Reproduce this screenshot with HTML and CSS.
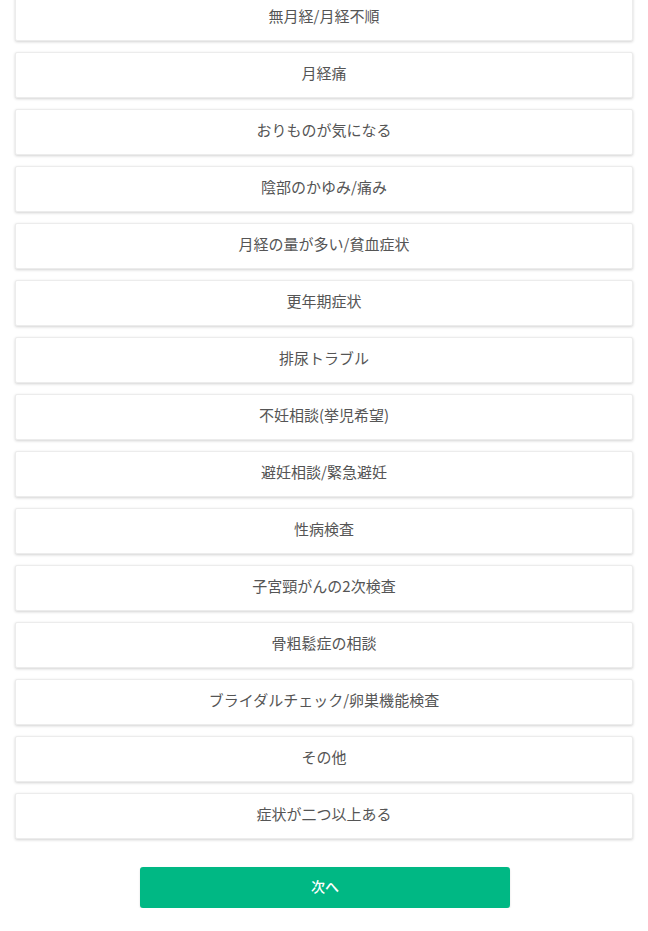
FILE: index.html
```html
<!DOCTYPE html>
<html lang="ja">
<head>
<meta charset="utf-8">
<link rel="stylesheet" href="styles.css">
</head>
<body>
<main class="page">
  <ul class="options">
    <li class="option">無月経/月経不順</li>
    <li class="option">月経痛</li>
    <li class="option">おりものが気になる</li>
    <li class="option">陰部のかゆみ/痛み</li>
    <li class="option">月経の量が多い/貧血症状</li>
    <li class="option">更年期症状</li>
    <li class="option">排尿トラブル</li>
    <li class="option">不妊相談(挙児希望)</li>
    <li class="option">避妊相談/緊急避妊</li>
    <li class="option">性病検査</li>
    <li class="option">子宮頸がんの2次検査</li>
    <li class="option">骨粗鬆症の相談</li>
    <li class="option">ブライダルチェック/卵巣機能検査</li>
    <li class="option">その他</li>
    <li class="option">症状が二つ以上ある</li>
  </ul>
  <div class="actions">
    <button class="next" type="button">次へ</button>
  </div>
</main>
</body>
</html>
```

FILE: styles.css
```css
html, body {
  margin: 0;
  padding: 0;
  background: #ffffff;
}

body {
  font-family: "Noto Sans CJK JP", "Open Sans", sans-serif;
  color: #555555;
}

.page {
  padding: 0 15px;
}

.options {
  list-style: none;
  margin: -5px 0 0;
  padding: 0;
  display: flex;
  flex-direction: column;
  gap: 11px;
}

.option {
  box-sizing: border-box;
  height: 46px;
  width: 618px;
  padding-bottom: 5px;
  display: flex;
  align-items: center;
  justify-content: center;
  background: #ffffff;
  border: 1px solid #ececec;
  border-radius: 2px;
  box-shadow: 0 1px 3px rgba(0, 0, 0, 0.18);
  font-size: 15px;
  line-height: 1;
  color: #555555;
}

.actions {
  display: flex;
  padding: 28px 0 0 125px;
}

.next {
  width: 370px;
  height: 41px;
  padding: 0 0 3px;
  border: none;
  border-radius: 3px;
  background: #00b884;
  color: #ffffff;
  font-family: "Noto Sans CJK JP", "Open Sans", sans-serif;
  font-size: 14px;
  font-weight: 500;
  box-shadow: 0 1px 2px rgba(0, 0, 0, 0.15);
  cursor: pointer;
}
```
